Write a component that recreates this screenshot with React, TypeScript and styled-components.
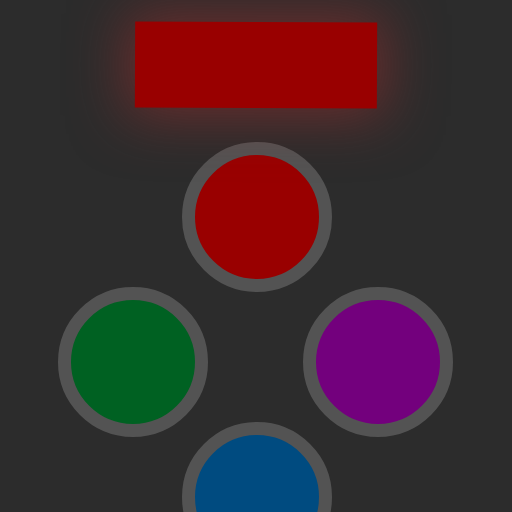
import React from "react";
import styled, { createGlobalStyle } from "styled-components";

const Global = createGlobalStyle`
  html, body {
    margin: 0;
    padding: 0;
    width: 512px;
    height: 512px;
    overflow: hidden;
    background: #2c2c2c;
    font-family: "Liberation Sans", Arial, sans-serif;
  }
`;

const Stage = styled.div`
  display: flex;
  flex-direction: column;
  align-items: flex-start;
  width: 512px;
  height: 512px;
  padding-top: 22px;
  box-sizing: border-box;
  overflow: hidden;
`;

const Display = styled.div`
  width: 242px;
  height: 86px;
  flex-shrink: 0;
  margin-left: 135px;
  background: #990000;
  transform: rotate(0.25deg);
  box-shadow: 0 0 55px 8px rgba(150, 45, 45, 0.6);
`;

const Pad = styled.div<{ $color: string; $left?: number; $top?: number }>`
  width: 150px;
  height: 150px;
  box-sizing: border-box;
  border-radius: 50%;
  border: 13px solid #535353;
  background: ${(p) => p.$color};
  margin-left: ${(p) => p.$left ?? 0}px;
  margin-top: ${(p) => p.$top ?? 0}px;
  flex-shrink: 0;
`;

const Row = styled.div`
  display: flex;
  flex-shrink: 0;
  gap: 95px;
  margin-left: 58px;
  margin-top: -5px;
`;

export default function App() {
  return (
    <>
      <Global />
      <Stage>
        <Display />
        <Pad $color="#990000" $left={182} $top={34} />
        <Row>
          <Pad $color="#006122" />
          <Pad $color="#73007d" />
        </Row>
        <Pad $color="#004b80" $left={182} $top={-15} />
      </Stage>
    </>
  );
}
